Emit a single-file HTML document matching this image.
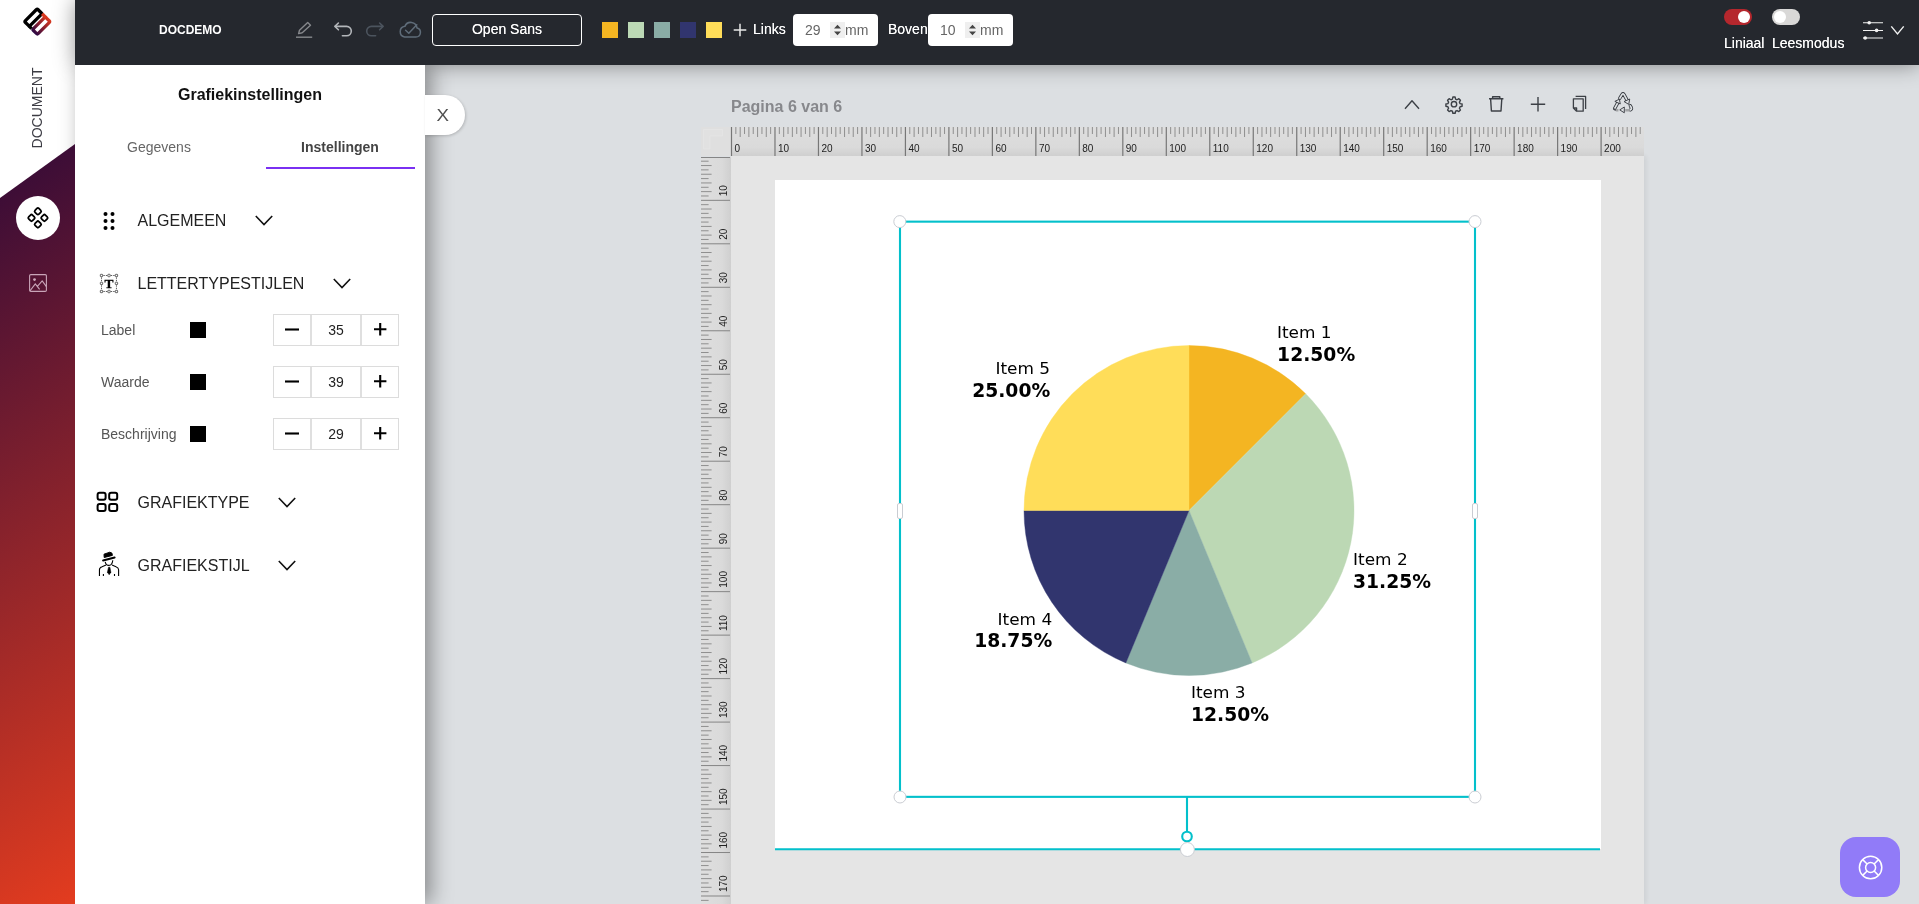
<!DOCTYPE html>
<html lang="nl">
<head>
<meta charset="utf-8">
<title>DOCDEMO</title>
<style>
*{box-sizing:border-box;margin:0;padding:0}
html,body{width:1919px;height:904px;overflow:hidden}
body{position:relative;background:#dcdfe2;font-family:"Liberation Sans",Arial,sans-serif;font-size:14px;color:#222}
.abs{position:absolute}
svg{display:block;overflow:visible}
#head,#panel,#side,#hr,#vr,#chart,#pglabel,#closeb{will-change:transform}
/* ---------- sidebar ---------- */
#side{position:absolute;left:0;top:0;width:75px;height:904px;background:#fff;overflow:hidden;z-index:1}
#grad{z-index:2;position:absolute;left:0;top:144px;width:75px;height:760px;background:linear-gradient(147deg,#320a38 0%,#e33c1f 100%);clip-path:polygon(0 54px,75px 0,75px 760px,0 760px)}
#side .shade{position:absolute;left:51px;top:0;width:24px;height:150px;background:linear-gradient(90deg,rgba(0,0,0,0) 0%,rgba(0,0,0,.025) 45%,rgba(0,0,0,.11) 100%)}
#side .doc{position:absolute;left:36.5px;top:108px;transform:translate(-50%,-50%) rotate(-90deg);font-size:14px;color:#3c3c44;white-space:nowrap}
#side .circle{position:absolute;left:16px;top:196px;width:44px;height:44px;border-radius:50%;background:#fff}
/* ---------- header ---------- */
#head{position:absolute;left:75px;top:0;width:1844px;height:65px;background:#25282e;color:#fff;z-index:2}
#head .title{position:absolute;left:84px;top:23px;font-weight:bold;font-size:12px;line-height:14px}
#head .fontbtn{position:absolute;left:357px;top:14px;width:150px;height:32px;border:1.5px solid #fff;border-radius:4px;text-align:center;line-height:28px;font-size:14px;color:#fff;text-shadow:0 0 .6px rgba(255,255,255,.8)}
#head .sw{position:absolute;top:22px;width:16px;height:16px}
#head .lbl{position:absolute;top:21px;font-size:14px;line-height:16px;color:#fff;text-shadow:0 0 .6px rgba(255,255,255,.8)}
#head .num{position:absolute;top:14px;width:85px;height:32px;background:#fff;border-radius:4px;color:#666;font-size:14px;line-height:32px}
#head .num .v{position:absolute;left:12px;top:0}
#head .num .sp{position:absolute;left:37px;top:8px;width:15px;height:16px;background:#efefef}
#head .num .u{position:absolute;left:52px;top:0}
#head .tog{position:absolute;top:9px;width:28px;height:16px;border-radius:8px}
#head .tog i{position:absolute;top:2px;width:12px;height:12px;border-radius:50%;background:#fff}
#shA{position:absolute;left:75px;top:65px;width:350px;height:839px;z-index:1;box-shadow:6px 0 20px rgba(0,0,0,.38)}
#shB{position:absolute;left:75px;top:0;width:1844px;height:65px;z-index:1;box-shadow:0 0 20px rgba(0,0,0,.42)}
/* ---------- panel ---------- */
#panel{position:absolute;left:75px;top:65px;width:350px;height:839px;background:#fff;z-index:3}
#panel h2{position:absolute;left:0;top:20px;width:350px;text-align:center;font-size:16px;line-height:20px;font-weight:bold;color:#111}
#panel .tab{position:absolute;top:73px;font-size:14px;line-height:18px;width:150px;text-align:center}
#panel .sec{position:absolute;left:62.5px;font-size:16px;line-height:20px;color:#222;white-space:nowrap}
#panel .row{position:absolute;left:26px;font-size:14px;line-height:18px;color:#555}
#panel .csq{position:absolute;left:115px;width:16px;height:16px;background:#000}
#panel .step{position:absolute;left:198px;width:126px;height:32px;border:1px solid #dcdcdc;background:#fff}
#panel .step b{position:absolute;top:0;height:30px;font-weight:normal;text-align:center;line-height:30px;font-size:14px;color:#222}
#panel .step .m{left:0;width:38px;border-right:2px solid #dfdfdf}
#panel .step .n{left:38px;width:48px}
#panel .step .p{left:86px;width:38px;border-left:2px solid #dfdfdf}
#closeb{z-index:4;position:absolute;left:425px;top:95px;width:40px;height:40px;background:#fff;border-radius:0 20px 20px 0;box-shadow:1px 1px 3px rgba(0,0,0,.18);text-align:center;line-height:42px;font-size:17px;color:#505050;padding-right:5px}
#headshadow{position:absolute;left:425px;top:65px;width:1494px;height:10px;background:linear-gradient(180deg,rgba(0,0,0,.22),rgba(0,0,0,0))}
/* ---------- canvas ---------- */
#pglabel{position:absolute;left:731px;top:97px;font-size:16px;line-height:20px;font-weight:bold;color:#87888c}
#corner{position:absolute;left:701px;top:127px;width:30px;height:29px;background:#dfdfdf}
#hr{position:absolute;left:731px;top:127px;width:913px;height:29px;background:linear-gradient(180deg,#dedede 0%,#dadada 70%,#cfcfcf 100%)}
#vr{position:absolute;left:701px;top:157px;width:30px;height:747px;background:linear-gradient(90deg,#dedede 0%,#dadada 70%,#cfcfcf 100%);overflow:hidden}
#cv{position:absolute;left:731px;top:156px;width:913px;height:748px;background:#e5e5e5;box-shadow:2px 0 5px rgba(0,0,0,.07)}
#page{position:absolute;left:775px;top:180px;width:825.600px;height:669px;background:#fff}
#help{position:absolute;left:1840px;top:837px;width:60px;height:60px;border-radius:16px;background:#917bf8}
.rl text{font-family:"Liberation Sans",Arial,sans-serif;font-size:10px;fill:#222}
.ch text{font-family:"DejaVu Sans",Verdana,sans-serif;fill:#000}
</style>
</head>
<body>

<!-- ================= header ================= -->
<div id="head">
  <div class="title">DOCDEMO</div>
  <svg class="abs" style="left:215px;top:18px" width="140" height="24" viewBox="290 18 140 24" fill="none" stroke-linecap="round" stroke-linejoin="round">
    <g stroke="#86888c" stroke-width="1.4"><path d="M296 37.2h16.2" stroke-linecap="butt"/><path d="M298.6 33.6l.9-3.4 8.2-7.6 2.8 2.7-8.3 7.5z"/></g>
    <g stroke="#b3b6ba" stroke-width="1.6" transform="translate(.8 0)"><path d="M337.6 23l-3.500 3.400 3.500 3.400"/><path d="M334.6 26.4h11.2a4.7 4.7 0 0 1 0 9.4h-4.2"/></g>
    <g stroke="#4c545e" stroke-width="1.6" transform="translate(-.8 0)"><path d="M380.400 23l3.500 3.400-3.500 3.400"/><path d="M383.4 26.4h-11.2a4.7 4.7 0 0 0 0 9.4h4.2"/></g>
    <g stroke="#5f6c79" stroke-width="1.5"><path d="M404.6 37h11.2a4.6 4.6 0 0 0 1.2-9.05 6.3 6.3 0 0 0-12.1-1.6 5.4 5.4 0 0 0-.3 10.65z"/><path d="M405.6 30.2l3.2 3 8-8.4"/></g>
  </svg>
  <div class="fontbtn">Open Sans</div>
  <div class="sw" style="left:527px;background:#f4b522"></div>
  <div class="sw" style="left:553px;background:#bcd9b5"></div>
  <div class="sw" style="left:579px;background:#8aada6"></div>
  <div class="sw" style="left:605px;background:#31356e"></div>
  <div class="sw" style="left:631px;background:#ffdd59"></div>
  <svg class="abs" style="left:658px;top:23px" width="14" height="14" viewBox="0 0 14 14"><path d="M7 .7v12.6M.7 7h12.6" stroke="#e8e8e8" stroke-width="1.5" fill="none"/></svg>
  <div class="lbl" style="left:678px">Links</div>
  <div class="num" style="left:718px"><span class="v">29</span><span class="sp"><svg width="15" height="16" viewBox="0 0 15 16"><path d="M4 6.6L7.5 2.8 11 6.6zM4 9.4L7.5 13.2 11 9.4z" fill="#444"/></svg></span><span class="u">mm</span></div>
  <div class="lbl" style="left:813px">Boven</div>
  <div class="num" style="left:853px"><span class="v">10</span><span class="sp"><svg width="15" height="16" viewBox="0 0 15 16"><path d="M4 6.6L7.5 2.8 11 6.6zM4 9.4L7.5 13.2 11 9.4z" fill="#444"/></svg></span><span class="u">mm</span></div>

  <div class="tog" style="left:1649px;background:#b5272d"><i style="left:14px"></i></div>
  <div class="tog" style="left:1697px;background:#d9d8d7"><i style="left:2px"></i></div>
  <div class="lbl" style="left:1649px;top:35px">Liniaal</div>
  <div class="lbl" style="left:1697px;top:35px">Leesmodus</div>
  <svg class="abs" style="left:1786px;top:18px" width="46" height="26" viewBox="1861 18 46 26" fill="none" stroke="#f2f2f2" stroke-width="1.050">
    <path d="M1863 22.8h20M1863 30.4h20M1863 38h20"/>
    <g fill="#f2f2f2" stroke="none"><circle cx="1869.2" cy="22.8" r="1.800"/><circle cx="1876.6" cy="30.4" r="1.800"/><circle cx="1865.2" cy="38" r="1.800"/></g>
    <path d="M1891.3 26.4l6.2 7.6 6.2-7.6" stroke-width="1.4"/>
  </svg>
</div>

<!-- ================= sidebar ================= -->
<div id="side">
  <svg class="abs" style="left:20px;top:4px" width="36" height="36" viewBox="20 4 36 36" fill="none" stroke-width="3.100" stroke-linejoin="round">
    <defs><linearGradient id="lg" gradientUnits="userSpaceOnUse" x1="-10" y1="0" x2="10" y2="0"><stop offset="0" stop-color="#2a0845"/><stop offset=".5" stop-color="#8a1f2d"/><stop offset="1" stop-color="#dc3a1f"/></linearGradient></defs>
    <g transform="translate(37.300 21.620) rotate(-45) scale(1.055)">
      <rect x="-8.530" y="2.100" width="17.060" height="6.550" rx="1.300" stroke="url(#lg)"/>
      <rect x="-8.530" y="-8.650" width="17.060" height="6.550" rx="1.300" stroke="#000"/>
      <path d="M-8.530 -3.200V.900" stroke="#000"/>
      <path d="M8.530 3.400V-2" stroke="#d9391f"/>
    </g>
  </svg>
  <div class="doc">DOCUMENT</div>
</div>

  <div id="grad"></div>
  <svg class="abs" style="left:28px;top:273px;z-index:2" width="20" height="20" viewBox="28 273 20 20" fill="none" stroke="#c9a5b8" stroke-width="1.1" stroke-linejoin="round">
    <rect x="29.6" y="274.6" width="16.8" height="16.8" rx="1.2"/>
    <circle cx="34.500" cy="279.600" r="1.350" fill="#cfaabd" stroke="none"/>
    <path d="M30 290.800l5.300-7 4.300 5.600M37.400 286.300l4.800-5.400 4.200 5.700"/>
  </svg>
  <div class="abs" style="left:16px;top:196px;width:44px;height:44px;border-radius:50%;background:#fff;z-index:2"></div>
  <svg class="abs" style="left:26px;top:206px;z-index:2" width="24" height="24" viewBox="26 206 24 24" fill="none" stroke="#000" stroke-width="1.800">
    <rect x="-2.700" y="-2.700" width="5.400" height="5.400" rx="1.400" transform="translate(37.900 211.300) rotate(45)"/>
    <rect x="-2.700" y="-2.700" width="5.400" height="5.400" rx="1.400" transform="translate(31.500 217.900) rotate(45)"/>
    <rect x="-2.700" y="-2.700" width="5.400" height="5.400" rx="1.400" transform="translate(44.400 217.900) rotate(45)"/>
    <rect x="-2.700" y="-2.700" width="5.400" height="5.400" rx="1.400" transform="translate(37.900 224.400) rotate(45)"/>
  </svg>
<div id="shA"></div><div id="shB"></div>
<!-- ================= panel ================= -->
<div id="panel">
  <h2>Grafiekinstellingen</h2>
  <div class="tab" style="left:9px;color:#666">Gegevens</div>
  <div class="tab" style="left:190px;color:#444;font-weight:bold">Instellingen</div>
  <div class="abs" style="left:191px;top:102px;width:149px;height:2px;background:#7a30f2"></div>

  <svg class="abs" style="left:26px;top:146px" width="18" height="20" viewBox="101 211 18 20"><g fill="#000"><circle cx="105.5" cy="214" r="2"/><circle cx="112.5" cy="214" r="2"/><circle cx="105.5" cy="221" r="2"/><circle cx="112.5" cy="221" r="2"/><circle cx="105.5" cy="228" r="2"/><circle cx="112.5" cy="228" r="2"/></g></svg>
  <div class="sec" style="top:146px">ALGEMEEN</div>
  <svg class="abs chev" style="left:180px;top:150px" width="18" height="11" viewBox="0 0 18 11"><path d="M.8 1l8.2 8.6L17.200 1" fill="none" stroke="#111" stroke-width="1.6"/></svg>

  <svg class="abs" style="left:24px;top:208px" width="22" height="22" viewBox="99 273 22 22" fill="none" stroke="#333">
    <path d="M103.400 275.500h3.800M110.800 275.500h3.800M103.400 291.500h3.800M110.800 291.500h3.800M101.500 277.400v4.100M101.500 285.300v4.300M116.450 277.400v4.100M116.450 285.300v4.300" stroke-width=".8" stroke-dasharray="1.400 1"/>
    <g fill="#fff" stroke-width=".75"><rect x="100.300" y="274.300" width="2.400" height="2.400" rx=".6"/><rect x="107.800" y="274.300" width="2.400" height="2.400" rx=".6"/><rect x="115.250" y="274.300" width="2.400" height="2.400" rx=".6"/><rect x="100.300" y="282.200" width="2.400" height="2.400" rx=".6"/><rect x="115.250" y="282.200" width="2.400" height="2.400" rx=".6"/><rect x="100.300" y="290.300" width="2.400" height="2.400" rx=".6"/><rect x="107.800" y="290.300" width="2.400" height="2.400" rx=".6"/><rect x="115.250" y="290.300" width="2.400" height="2.400" rx=".6"/></g>
    <text x="109" y="287.800" text-anchor="middle" font-family="Liberation Serif,serif" font-weight="bold" font-size="13.400" fill="#000" stroke="#000" stroke-width=".3">T</text>
  </svg>
  <div class="sec" style="top:209px">LETTERTYPESTIJLEN</div>
  <svg class="abs chev" style="left:258px;top:213px" width="18" height="11" viewBox="0 0 18 11"><path d="M.8 1l8.2 8.6L17.200 1" fill="none" stroke="#111" stroke-width="1.6"/></svg>

  <div class="row" style="top:256px">Label</div><div class="csq" style="top:257px"></div>
  <div class="step" style="top:249px"><b class="m"><svg style="margin:12.700px auto 0" width="14" height="3"><path d="M0 1.500h14" stroke="#000" stroke-width="2.100"/></svg></b><b class="n">35</b><b class="p"><svg style="margin:7.800px auto 0" width="12.400" height="12.400"><path d="M0 6.200h12.400M6.200 0v12.400" stroke="#000" stroke-width="2.100"/></svg></b></div>
  <div class="row" style="top:308px">Waarde</div><div class="csq" style="top:309px"></div>
  <div class="step" style="top:301px"><b class="m"><svg style="margin:12.700px auto 0" width="14" height="3"><path d="M0 1.500h14" stroke="#000" stroke-width="2.100"/></svg></b><b class="n">39</b><b class="p"><svg style="margin:7.800px auto 0" width="12.400" height="12.400"><path d="M0 6.200h12.400M6.200 0v12.400" stroke="#000" stroke-width="2.100"/></svg></b></div>
  <div class="row" style="top:360px">Beschrijving</div><div class="csq" style="top:361px"></div>
  <div class="step" style="top:353px"><b class="m"><svg style="margin:12.700px auto 0" width="14" height="3"><path d="M0 1.500h14" stroke="#000" stroke-width="2.100"/></svg></b><b class="n">29</b><b class="p"><svg style="margin:7.800px auto 0" width="12.400" height="12.400"><path d="M0 6.200h12.400M6.200 0v12.400" stroke="#000" stroke-width="2.100"/></svg></b></div>

  <svg class="abs" style="left:21px;top:426px" width="24" height="22" viewBox="96 491 24 22" fill="none" stroke="#000" stroke-width="2">
    <rect x="97.6" y="492.8" width="8" height="7" rx="2"/><rect x="109.200" y="492.8" width="8" height="7" rx="2"/><rect x="97.6" y="504" width="8" height="7" rx="2"/><rect x="109.200" y="504" width="8" height="7" rx="2"/>
  </svg>
  <div class="sec" style="top:428px">GRAFIEKTYPE</div>
  <svg class="abs chev" style="left:203px;top:432px" width="18" height="11" viewBox="0 0 18 11"><path d="M.8 1l8.2 8.6L17.200 1" fill="none" stroke="#111" stroke-width="1.6"/></svg>

  <svg class="abs" style="left:22px;top:485px" width="24" height="28" viewBox="97 550 24 28" fill="none" stroke="#000" stroke-width="1.100">
    <path d="M104 554.200l5.800-2 2.100.9.500 2.300-8.200 2.100z" fill="#000" stroke-linejoin="round" stroke-width="1"/>
    <path d="M103.100 560.500l11.500-3" stroke-width="2" stroke-linecap="round"/>
    <path d="M105.200 561.800c.5 2.200 1.600 3.600 3.700 3.600 2.200 0 3.500-2 3.900-5.200"/>
    <path d="M99.450 576v-6.300c0-1.700 1.100-2.500 2.600-3l4-1.600M118.600 576v-6.300c0-1.700-1.100-2.500-2.600-3l-4-1.600"/>
    <path d="M108.500 567.200h1.400l1 5.100-1.700 2.500-1.800-2.500z" fill="#000" stroke-width=".5"/>
    <path d="M103.400 573.900v2.100M114.500 573.900v2.100" stroke-width="1.100"/>
  </svg>
  <div class="sec" style="top:491px">GRAFIEKSTIJL</div>
  <svg class="abs chev" style="left:203px;top:495px" width="18" height="11" viewBox="0 0 18 11"><path d="M.8 1l8.2 8.6L17.200 1" fill="none" stroke="#111" stroke-width="1.6"/></svg>
</div>
<div id="closeb"><span style="display:inline-block;transform:scaleX(1.1)">X</span></div>

<!-- ================= canvas ================= -->
<div id="pglabel">Pagina 6 van 6</div>
<svg class="abs" style="left:1400px;top:92px" width="240" height="24" viewBox="1400 92 240 24" fill="none" stroke="#3c4046" stroke-width="1.4" stroke-linejoin="round">
  <path d="M1405 108.800l7-8 7 8"/>
  <g transform="translate(1454 104.200) scale(.87)" stroke-width="1.600"><circle r="3.100"/><path d="M-1.300-8.200h2.600l.5 2.300 1.700.8 2.100-1.200 1.800 1.800-1.200 2.100.8 1.700 2.300.5v2.600l-2.300.5-.8 1.700 1.200 2.100-1.800 1.800-2.100-1.200-1.700.8-.5 2.300h-2.600l-.5-2.300-1.700-.8-2.100 1.200-1.800-1.800 1.200-2.100-.8-1.700-2.300-.5v-2.600l2.300-.5.8-1.700-1.200-2.100 1.800-1.800 2.100 1.200 1.700-.8z"/></g>
  <path d="M1489 98.800h14.400M1492.600 98.800v-2h7.200v2M1490.600 98.800l.8 12.200h9.600l.8-12.200"/>
  <path d="M1538 97v14.400M1530.800 104.200h14.400"/>
  <path d="M1575.600 96.400h10v12.600M1573.400 98.800h9.800v12.400h-6.600l-3.200-3.200zM1573.400 108h3.200v3.200" stroke-width="1.300"/>
  <g stroke-linecap="round" stroke-linejoin="round">
    <g stroke="#33373d" stroke-width="3.300"><path d="M1619.800 98.200l2.300-3.800q.9-1.300 1.800 0l3.300 6"/><path d="M1614.600 108.600l3.400-6.200"/><path d="M1630.300 105.800l1 1.800q.6 1.600-1 2.300"/></g>
    <g stroke="#dfe2e5" stroke-width="1.700"><path d="M1619.800 98.200l2.300-3.800q.9-1.300 1.800 0l3.300 6"/><path d="M1614.600 108.600l3.400-6.200"/><path d="M1630.300 105.800l1 1.800q.6 1.600-1 2.300"/></g>
    <path d="M1615.800 110.200h2.600M1625.200 110.200h4.600" stroke="#a2a4a6" stroke-width="2.400" stroke-linecap="butt"/>
    <path d="M1613.900 108.400q-.4 1.600 1.500 1.900" stroke="#33373d" stroke-width=".9" fill="none"/>
    <g fill="#dfe2e5" stroke="#33373d" stroke-width=".9"><path d="M1624.400 101.400l5.300-2.400-.9 5z"/><path d="M1615.200 101.200l4.200-2 .8 4.400z"/><path d="M1624.300 107.400v5.400l-4.200-2.700z"/></g>
  </g>
</svg>

<div id="corner"><svg width="30" height="29" viewBox="0 0 30 29"><path d="M2.500 2.500h19v6.500h-12.500v13h-6.500z" fill="#e1e1e1" stroke="#e4e4e4" stroke-width="1"/></svg></div>
<div id="cv"></div>
<div id="hr"><svg class="rl" width="913" height="29" viewBox="0 0 913 29"><path d="M4.85 0V7M13.54 0V7M22.24 0V7M30.94 0V7M39.63 0V7M48.33 0V7M57.02 0V7M65.72 0V7M74.42 0V7M83.11 0V7M91.81 0V7M100.50 0V7M109.20 0V7M117.90 0V7M126.59 0V7M135.29 0V7M143.98 0V7M152.68 0V7M161.38 0V7M170.07 0V7M178.77 0V7M187.46 0V7M196.16 0V7M204.86 0V7M213.55 0V7M222.25 0V7M230.94 0V7M239.64 0V7M248.34 0V7M257.03 0V7M265.73 0V7M274.42 0V7M283.12 0V7M291.82 0V7M300.51 0V7M309.21 0V7M317.90 0V7M326.60 0V7M335.30 0V7M343.99 0V7M352.69 0V7M361.38 0V7M370.08 0V7M378.78 0V7M387.47 0V7M396.17 0V7M404.86 0V7M413.56 0V7M422.26 0V7M430.95 0V7M439.65 0V7M448.34 0V7M457.04 0V7M465.74 0V7M474.43 0V7M483.13 0V7M491.82 0V7M500.52 0V7M509.22 0V7M517.91 0V7M526.61 0V7M535.30 0V7M544.00 0V7M552.70 0V7M561.39 0V7M570.09 0V7M578.78 0V7M587.48 0V7M596.18 0V7M604.87 0V7M613.57 0V7M622.26 0V7M630.96 0V7M639.66 0V7M648.35 0V7M657.05 0V7M665.74 0V7M674.44 0V7M683.14 0V7M691.83 0V7M700.53 0V7M709.22 0V7M717.92 0V7M726.62 0V7M735.31 0V7M744.01 0V7M752.70 0V7M761.40 0V7M770.10 0V7M778.79 0V7M787.49 0V7M796.18 0V7M804.88 0V7M813.58 0V7M822.27 0V7M830.97 0V7M839.66 0V7M848.36 0V7M857.06 0V7M865.75 0V7M874.45 0V7M883.14 0V7M891.84 0V7M900.54 0V7M909.23 0V7M9.20 0V10M17.89 0V10M26.59 0V10M35.28 0V10M52.68 0V10M61.37 0V10M70.07 0V10M78.76 0V10M96.16 0V10M104.85 0V10M113.55 0V10M122.24 0V10M139.64 0V10M148.33 0V10M157.03 0V10M165.72 0V10M183.12 0V10M191.81 0V10M200.51 0V10M209.20 0V10M226.60 0V10M235.29 0V10M243.99 0V10M252.68 0V10M270.08 0V10M278.77 0V10M287.47 0V10M296.16 0V10M313.56 0V10M322.25 0V10M330.95 0V10M339.64 0V10M357.04 0V10M365.73 0V10M374.43 0V10M383.12 0V10M400.52 0V10M409.21 0V10M417.91 0V10M426.60 0V10M444.00 0V10M452.69 0V10M461.39 0V10M470.08 0V10M487.48 0V10M496.17 0V10M504.87 0V10M513.56 0V10M530.96 0V10M539.65 0V10M548.35 0V10M557.04 0V10M574.44 0V10M583.13 0V10M591.83 0V10M600.52 0V10M617.92 0V10M626.61 0V10M635.31 0V10M644.00 0V10M661.40 0V10M670.09 0V10M678.79 0V10M687.48 0V10M704.88 0V10M713.57 0V10M722.27 0V10M730.96 0V10M748.36 0V10M757.05 0V10M765.75 0V10M774.44 0V10M791.84 0V10M800.53 0V10M809.23 0V10M817.92 0V10M835.32 0V10M844.01 0V10M852.71 0V10M861.40 0V10M878.80 0V10M887.49 0V10M896.19 0V10M904.88 0V10" stroke="#8f8f8f" stroke-width="1" fill="none"/><path d="M0.50 0V29M43.98 0V29M87.46 0V29M130.94 0V29M174.42 0V29M217.90 0V29M261.38 0V29M304.86 0V29M348.34 0V29M391.82 0V29M435.30 0V29M478.78 0V29M522.26 0V29M565.74 0V29M609.22 0V29M652.70 0V29M696.18 0V29M739.66 0V29M783.14 0V29M826.62 0V29M870.10 0V29" stroke="#777" stroke-width="1.2" fill="none"/><text x="3.5" y="24.5">0</text><text x="47.0" y="24.5">10</text><text x="90.5" y="24.5">20</text><text x="133.9" y="24.5">30</text><text x="177.4" y="24.5">40</text><text x="220.9" y="24.5">50</text><text x="264.4" y="24.5">60</text><text x="307.9" y="24.5">70</text><text x="351.3" y="24.5">80</text><text x="394.8" y="24.5">90</text><text x="438.3" y="24.5">100</text><text x="481.8" y="24.5">110</text><text x="525.3" y="24.5">120</text><text x="568.7" y="24.5">130</text><text x="612.2" y="24.5">140</text><text x="655.7" y="24.5">150</text><text x="699.2" y="24.5">160</text><text x="742.7" y="24.5">170</text><text x="786.1" y="24.5">180</text><text x="829.6" y="24.5">190</text><text x="873.1" y="24.5">200</text></svg></div>
<div id="vr"><svg class="rl" width="30" height="747" viewBox="0 0 30 747"><path d="M0 4.20H7.6M0 8.55H10.6M0 12.89H7.6M0 17.24H10.6M0 21.59H7.6M0 25.94H10.6M0 30.29H7.6M0 34.63H10.6M0 38.98H7.6M0 47.68H7.6M0 52.03H10.6M0 56.37H7.6M0 60.72H10.6M0 65.07H7.6M0 69.42H10.6M0 73.77H7.6M0 78.11H10.6M0 82.46H7.6M0 91.16H7.6M0 95.51H10.6M0 99.85H7.6M0 104.20H10.6M0 108.55H7.6M0 112.90H10.6M0 117.25H7.6M0 121.59H10.6M0 125.94H7.6M0 134.64H7.6M0 138.99H10.6M0 143.33H7.6M0 147.68H10.6M0 152.03H7.6M0 156.38H10.6M0 160.73H7.6M0 165.07H10.6M0 169.42H7.6M0 178.12H7.6M0 182.47H10.6M0 186.81H7.6M0 191.16H10.6M0 195.51H7.6M0 199.86H10.6M0 204.21H7.6M0 208.55H10.6M0 212.90H7.6M0 221.60H7.6M0 225.95H10.6M0 230.29H7.6M0 234.64H10.6M0 238.99H7.6M0 243.34H10.6M0 247.69H7.6M0 252.03H10.6M0 256.38H7.6M0 265.08H7.6M0 269.43H10.6M0 273.77H7.6M0 278.12H10.6M0 282.47H7.6M0 286.82H10.6M0 291.17H7.6M0 295.51H10.6M0 299.86H7.6M0 308.56H7.6M0 312.91H10.6M0 317.25H7.6M0 321.60H10.6M0 325.95H7.6M0 330.30H10.6M0 334.65H7.6M0 338.99H10.6M0 343.34H7.6M0 352.04H7.6M0 356.39H10.6M0 360.73H7.6M0 365.08H10.6M0 369.43H7.6M0 373.78H10.6M0 378.13H7.6M0 382.47H10.6M0 386.82H7.6M0 395.52H7.6M0 399.87H10.6M0 404.21H7.6M0 408.56H10.6M0 412.91H7.6M0 417.26H10.6M0 421.61H7.6M0 425.95H10.6M0 430.30H7.6M0 439.00H7.6M0 443.35H10.6M0 447.69H7.6M0 452.04H10.6M0 456.39H7.6M0 460.74H10.6M0 465.09H7.6M0 469.43H10.6M0 473.78H7.6M0 482.48H7.6M0 486.83H10.6M0 491.17H7.6M0 495.52H10.6M0 499.87H7.6M0 504.22H10.6M0 508.57H7.6M0 512.91H10.6M0 517.26H7.6M0 525.96H7.6M0 530.31H10.6M0 534.65H7.6M0 539.00H10.6M0 543.35H7.6M0 547.70H10.6M0 552.05H7.6M0 556.39H10.6M0 560.74H7.6M0 569.44H7.6M0 573.79H10.6M0 578.13H7.6M0 582.48H10.6M0 586.83H7.6M0 591.18H10.6M0 595.53H7.6M0 599.87H10.6M0 604.22H7.6M0 612.92H7.6M0 617.27H10.6M0 621.61H7.6M0 625.96H10.6M0 630.31H7.6M0 634.66H10.6M0 639.01H7.6M0 643.35H10.6M0 647.70H7.6M0 656.40H7.6M0 660.75H10.6M0 665.09H7.6M0 669.44H10.6M0 673.79H7.6M0 678.14H10.6M0 682.49H7.6M0 686.83H10.6M0 691.18H7.6M0 699.88H7.6M0 704.23H10.6M0 708.57H7.6M0 712.92H10.6M0 717.27H7.6M0 721.62H10.6M0 725.97H7.6M0 730.31H10.6M0 734.66H7.6M0 743.36H7.6M0 747.71H10.6M0 752.05H7.6M0 756.40H10.6" stroke="#8f8f8f" stroke-width="1" fill="none"/><path d="M0 0.50H29M0 43.33H29M0 86.81H29M0 130.29H29M0 173.77H29M0 217.25H29M0 260.73H29M0 304.21H29M0 347.69H29M0 391.17H29M0 434.65H29M0 478.13H29M0 521.61H29M0 565.09H29M0 608.57H29M0 652.05H29M0 695.53H29M0 739.01H29" stroke="#858585" stroke-width="1" fill="none"/><text transform="translate(25.5 39.3) rotate(-90)">10</text><text transform="translate(25.5 82.8) rotate(-90)">20</text><text transform="translate(25.5 126.3) rotate(-90)">30</text><text transform="translate(25.5 169.8) rotate(-90)">40</text><text transform="translate(25.5 213.2) rotate(-90)">50</text><text transform="translate(25.5 256.7) rotate(-90)">60</text><text transform="translate(25.5 300.2) rotate(-90)">70</text><text transform="translate(25.5 343.7) rotate(-90)">80</text><text transform="translate(25.5 387.2) rotate(-90)">90</text><text transform="translate(25.5 430.7) rotate(-90)">100</text><text transform="translate(25.5 474.1) rotate(-90)">110</text><text transform="translate(25.5 517.6) rotate(-90)">120</text><text transform="translate(25.5 561.1) rotate(-90)">130</text><text transform="translate(25.5 604.6) rotate(-90)">140</text><text transform="translate(25.5 648.0) rotate(-90)">150</text><text transform="translate(25.5 691.5) rotate(-90)">160</text><text transform="translate(25.5 735.0) rotate(-90)">170</text></svg></div>

<div id="page"></div>
<svg id="chart" class="abs ch" style="left:775px;top:180px" width="825" height="724" viewBox="775 180 825 724">
  <path d="M1189 510.5L1189.00 345.50A165 165 0 0 1 1305.67 393.83Z" fill="#f4b522" stroke="#f4b522" stroke-width="0.4"/><path d="M1189 510.5L1305.67 393.83A165 165 0 0 1 1252.14 662.94Z" fill="#bcd8b4" stroke="#bcd8b4" stroke-width="0.4"/><path d="M1189 510.5L1252.14 662.94A165 165 0 0 1 1125.86 662.94Z" fill="#8aada6" stroke="#8aada6" stroke-width="0.4"/><path d="M1189 510.5L1125.86 662.94A165 165 0 0 1 1024.00 510.50Z" fill="#31356e" stroke="#31356e" stroke-width="0.4"/><path d="M1189 510.5L1024.00 510.50A165 165 0 0 1 1189.00 345.50Z" fill="#ffdd59" stroke="#ffdd59" stroke-width="0.4"/>
  <g font-size="16.350"><text transform="translate(1277 338.050) scale(1.035 1)">Item 1</text><text transform="translate(1353.100 565.300) scale(1.035 1)">Item 2</text><text transform="translate(1191 697.950) scale(1.035 1)">Item 3</text><text transform="translate(1052.200 625) scale(1.035 1)" text-anchor="end">Item 4</text><text transform="translate(1050.1 373.7) scale(1.035 1)" text-anchor="end">Item 5</text></g>
  <g font-size="18.750" font-weight="bold"><text transform="translate(1277.100 360.800) scale(1 1.050)">12.50%</text><text transform="translate(1353 587.750) scale(1 1.050)">31.25%</text><text transform="translate(1191 721) scale(1 1.050)">12.50%</text><text transform="translate(1052.200 647.100) scale(1 1.050)" text-anchor="end">18.75%</text><text transform="translate(1050.2 396.6) scale(1 1.050)" text-anchor="end">25.00%</text></g>
  <g fill="none" stroke="#03c0cb" stroke-width="2.100"><rect x="900" y="221.650" width="575" height="575.200"/><path d="M1187 797v34M775 849.300h825"/><circle cx="1187" cy="836.500" r="4.800" fill="#fff"/></g>
  <g fill="#fff" stroke="#c9ccd2" stroke-width="1"><circle cx="899.800" cy="221.600" r="6"/><circle cx="1475" cy="221.600" r="6"/><circle cx="900" cy="797" r="6"/><circle cx="1475" cy="797" r="6"/><rect x="897.500" y="503.500" width="5" height="15" rx="1.500"/><rect x="1472.500" y="503.500" width="5" height="15" rx="1.500"/><circle cx="1187.400" cy="849.500" r="7"/></g>
</svg>

<div id="help"><svg width="60" height="60" viewBox="0 0 60 60" fill="none" stroke="#fff" stroke-width="1.500"><circle cx="30.600" cy="30.500" r="11.200"/><circle cx="30.600" cy="30.500" r="5"/><path d="M22.700 22.600l4.400 4.400M38.500 22.600l-4.400 4.400M22.700 38.400l4.400-4.400M38.500 38.400l-4.400-4.400"/></svg></div>
</body>
</html>
